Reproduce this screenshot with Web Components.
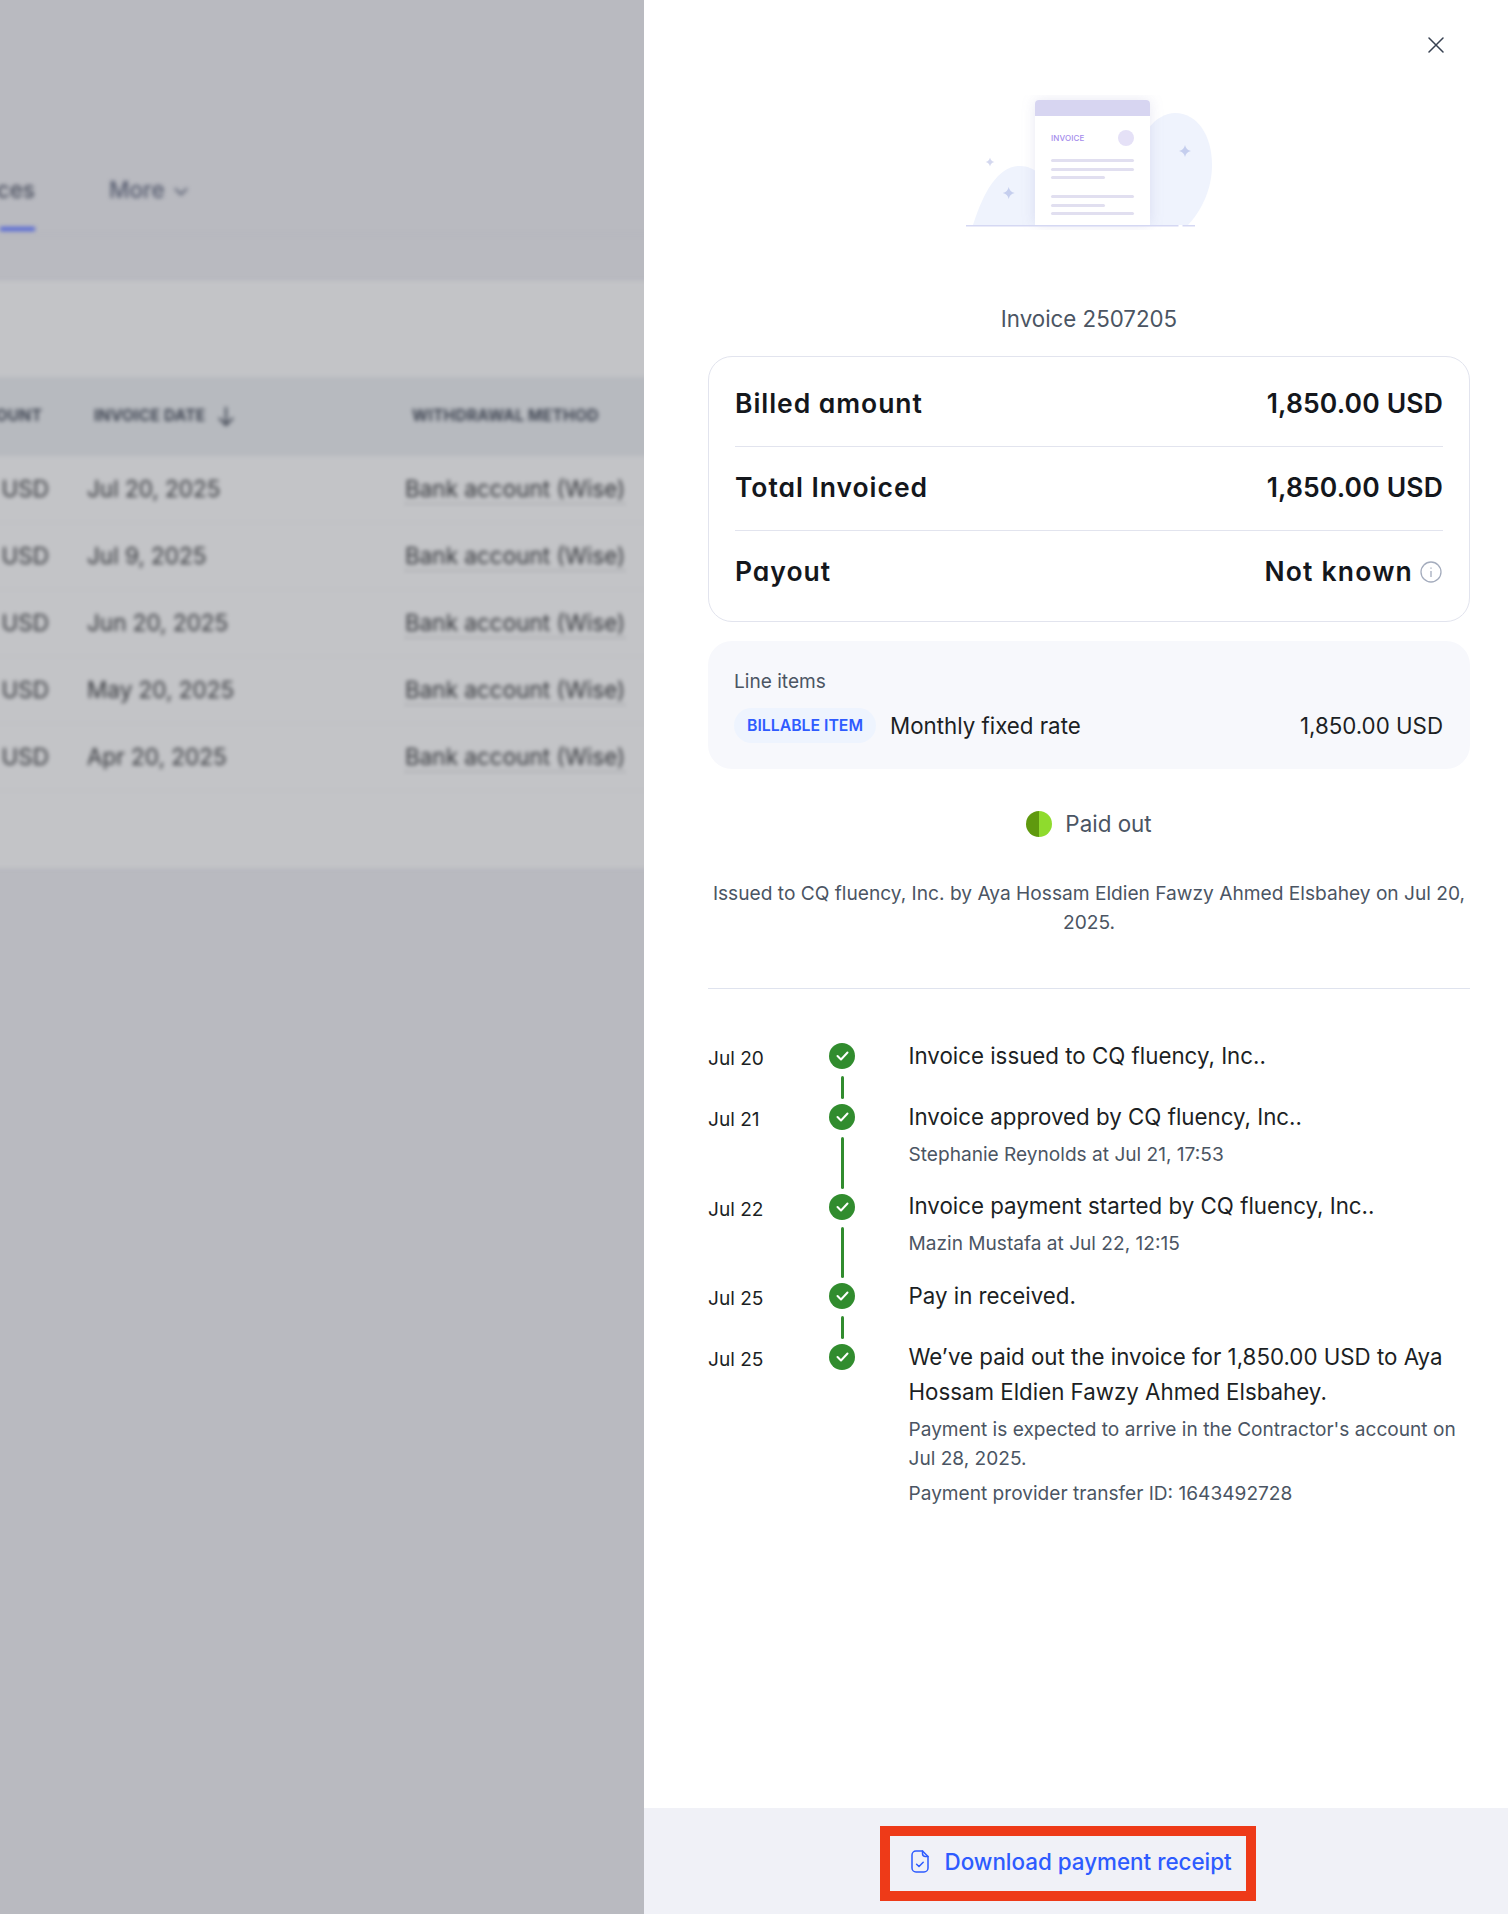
<!DOCTYPE html>
<html lang="en">
<head>
<meta charset="utf-8">
<title>Invoice 2507205</title>
<style>
  html, body { margin: 0; padding: 0; background: #fff; }
  body { font-family: Inter, "Liberation Sans", sans-serif; width: 1508px; height: 1914px; overflow: hidden; }
</style>
</head>
<body>
<app-shell>
  <blurred-page slot="page">
    <tab-bar></tab-bar>
    <invoice-table>
      <table-row amount="1,850.00 USD" date="Jul 20, 2025"></table-row>
      <table-row amount="1,850.00 USD" date="Jul 9, 2025"></table-row>
      <table-row amount="1,850.00 USD" date="Jun 20, 2025"></table-row>
      <table-row amount="1,850.00 USD" date="May 20, 2025"></table-row>
      <table-row amount="1,850.00 USD" date="Apr 20, 2025"></table-row>
    </invoice-table>
  </blurred-page>
  <invoice-panel slot="panel">
    <invoice-art></invoice-art>
    <panel-title>Invoice 2507205</panel-title>
    <summary-card>
      <summary-row pos="first" value="1,850.00 USD">Billed amount</summary-row>
      <summary-row pos="mid" value="1,850.00 USD">Total Invoiced</summary-row>
      <summary-row pos="last" value="Not known" info>Payout</summary-row>
    </summary-card>
    <line-items></line-items>
    <status-pill>Paid out</status-pill>
    <issued-note>Issued to CQ fluency, Inc. by Aya Hossam Eldien Fawzy Ahmed Elsbahey on Jul 20, 2025.</issued-note>
    <time-line>
      <time-item date="Jul 20" connector>Invoice issued to CQ fluency, Inc..</time-item>
      <time-item date="Jul 21" connector>Invoice approved by CQ fluency, Inc..
        <span slot="sub">Stephanie Reynolds at Jul 21, 17:53</span></time-item>
      <time-item date="Jul 22" connector>Invoice payment started by CQ fluency, Inc..
        <span slot="sub">Mazin Mustafa at Jul 22, 12:15</span></time-item>
      <time-item date="Jul 25" connector>Pay in received.</time-item>
      <time-item date="Jul 25">We’ve paid out the invoice for 1,850.00 USD to Aya Hossam Eldien Fawzy Ahmed Elsbahey.
        <span slot="sub">Payment is expected to arrive in the Contractor's account on Jul 28, 2025.</span>
        <span slot="sub">Payment provider transfer ID: 1643492728</span></time-item>
    </time-line>
    <receipt-footer slot="footer"></receipt-footer>
  </invoice-panel>
</app-shell>
<script>
function def(name, css, html, setup) {
  customElements.define(name, class extends HTMLElement {
    connectedCallback() {
      if (this.shadowRoot) return;
      const root = this.attachShadow({ mode: 'open' });
      const h = typeof html === 'function' ? html(this) : html;
      root.innerHTML = '<style>' + css + '</style>' + h;
      if (setup) setup(this, root);
    }
  });
}

def('app-shell', `
  :host { display: grid; grid-template-columns: 644px 864px; width: 1508px; height: 1914px; }
  .l { overflow: hidden; background: #b9bac0; min-width: 0; }
  .r { background: #fff; min-width: 0; }
`, `<div class="l"><slot name="page"></slot></div><div class="r"><slot name="panel"></slot></div>`);

/* The blurred layer runs 20px past the pane on each side so the blur does not fade at the pane's edges. */
def('blurred-page', `
  :host { display: block; height: 100%; margin: 0 -20px; padding: 0 20px; filter: blur(2.1px); color: #3e4148; }
`, `<slot></slot>`);

def('tab-bar', `
  :host { display: flex; align-items: flex-end; height: 234px; margin: 0 -20px; padding-left: 20px; border-bottom: 1px solid #b3b4bb;
    font: 500 22.5px/28px Inter, sans-serif; color: #4a4f5e; gap: 74px; }
  .tab { width: 35px; height: 59px; display: flex; justify-content: flex-end; white-space: nowrap;
    box-sizing: border-box; margin-bottom: 3px; padding-top: 4px; border-bottom: 4px solid #4f62d6; }
  .more { height: 62px; display: flex; gap: 9px; white-space: nowrap; align-items: flex-start; color: #555b6e; padding-top: 4px; box-sizing: border-box; }
  svg { margin-top: 11px; }
`, `<div class="tab">Invoices</div>
    <div class="more">More
      <svg width="14" height="9" viewBox="0 0 14 9" fill="none" stroke="#555b6e" stroke-width="1.8"><path d="M1 1.5l6 6 6-6"/></svg>
    </div>`);

def('invoice-table', `
  :host { display: block; margin: 46px -20px 0; padding: 96px 0 0 20px; background: #c3c4c7; height: 587px; box-sizing: border-box; }
  .head { display: grid; grid-template-columns: 94px 318px 1fr; align-items: center; height: 79px; padding-bottom: 2px; box-sizing: border-box;
    margin-left: -20px; padding-left: 20px; background: #b7babf;
    font: 700 15.6px Inter, sans-serif; letter-spacing: .2px; color: #3f4552; white-space: nowrap; }
  .a { display: flex; justify-content: flex-end; width: 42px; }
  .d { display: flex; align-items: center; gap: 11px; }
  ::slotted(*) { margin-left: -20px; padding-left: 20px; }
`, `<div class="head">
      <div><div class="a">AMOUNT</div></div>
      <div class="d">INVOICE DATE
        <svg width="18" height="22" viewBox="0 0 18 22" fill="none" stroke="#3f4552" stroke-width="2"><path d="M9 2v18M2 13l7 7 7-7"/></svg>
      </div>
      <div>WITHDRAWAL METHOD</div>
    </div><slot></slot>`);

def('table-row', `
  :host { display: grid; grid-template-columns: 87px 318px 1fr; align-items: center; height: 67px; box-sizing: border-box; padding-bottom: 1px;
    border-bottom: 1px solid #bcbdc1; font: 400 22.5px Inter, sans-serif; color: #34363b; white-space: nowrap; }
  .a { display: flex; justify-content: flex-end; width: 49px; }
  .m { display: inline-block; border-bottom: 1px dashed #85878d; line-height: 28px; margin-top: 2px; }
`, el => `<div><div class="a">${el.getAttribute('amount')}</div></div><div>${el.getAttribute('date')}</div><div><span class="m">Bank account (Wise)</span></div>`);

def('invoice-panel', `
  :host { display: flex; flex-direction: column; height: 1914px; }
  .body { flex: 1; min-height: 0; padding: 0 38px 0 64px; position: relative; }
  .close { position: absolute; left: 784px; top: 37px; width: 16px; height: 16px; display: block; }
`, `<div class="body">
      <svg class="close" viewBox="0 0 16 16" fill="none" stroke="#374151" stroke-width="1.5" stroke-linecap="round"><path d="M1 1l14 14M15 1L1 15"/></svg>
      <slot></slot>
    </div><slot name="footer"></slot>`);

def('invoice-art', `
  :host { display: flex; justify-content: center; padding-top: 95px; }
  svg { display: block; }
  .doc { filter: drop-shadow(0 0 7px rgba(90,95,170,.14)); }
  text { font: 500 8px Inter, sans-serif; fill: #a58cec; letter-spacing: .1px; }
`, `<svg width="260" height="135" viewBox="959 95 260 135">
      <path d="M973 225C984 190 999 166 1020 166C1028 166 1033 169 1037 172V225Z" fill="#eff3fd"/>
      <path d="M1148 129C1156 118 1166 113 1175 113C1197 113 1212 135 1212 165C1212 190 1201 211 1188 225H1148Z" fill="#eff3fd"/>
      <g class="doc">
        <path d="M1035 225V104a4 4 0 0 1 4-4h107a4 4 0 0 1 4 4v121Z" fill="#fff"/>
      </g>
      <path d="M1035 116V104a4 4 0 0 1 4-4h107a4 4 0 0 1 4 4v12Z" fill="#d7d5f1"/>
      <text x="1051" y="141">INVOICE</text>
      <circle cx="1126" cy="138" r="8" fill="#e5e1f7"/>
      <g fill="#e1dff0">
        <rect x="1051" y="159" width="83" height="3" rx="1.5"/>
        <rect x="1051" y="168" width="83" height="3" rx="1.5"/>
        <rect x="1051" y="176" width="54" height="3" rx="1.5"/>
        <rect x="1051" y="195" width="83" height="3" rx="1.5"/>
        <rect x="1051" y="204" width="54" height="3" rx="1.5"/>
        <rect x="1051" y="212" width="83" height="3" rx="1.5"/>
      </g>
      <g fill="#c5ceee">
        <path d="M1185 145Q1186 150 1191 151Q1186 152 1185 157Q1184 152 1179 151Q1184 150 1185 145Z"/>
        <path d="M1008.7 187Q1009.7 192 1014.7 193Q1009.7 194 1008.7 199Q1007.7 194 1002.7 193Q1007.7 192 1008.7 187Z"/>
        <path d="M990 157.5Q990.8 161.2 994.5 162Q990.8 162.8 990 166.5Q989.2 162.8 985.5 162Q989.2 161.2 990 157.5Z" fill="#d4d8ef"/>
      </g>
      <path d="M966 225.7H1178.5M1182.5 225.7H1195" stroke="#d5d8f3" stroke-width="1.6"/>
    </svg>`);

def('panel-title', `
  :host { display: block; text-align: center; margin-top: 74px; font: 400 22.3px/30px Inter, sans-serif; color: #4b5563; }
`, `<slot></slot>`);

def('summary-card', `
  :host { display: block; box-sizing: border-box; margin-top: 22px; height: 266px; padding: 0 26px;
    border: 1px solid #e2e4ee; border-radius: 24px; background: #fff; }
`, `<slot></slot>`);

def('summary-row', `
  :host { display: flex; justify-content: space-between; align-items: center; box-sizing: border-box;
    font: 600 26.5px/32px Inter, sans-serif; font-feature-settings: "cv11" 1; color: #14171c; white-space: nowrap; }
  :host([pos=first]) { height: 90px; padding-top: 3px; border-bottom: 1px solid #e2e4ee; }
  :host([pos=mid]) { height: 84px; padding-bottom: 3px; border-bottom: 1px solid #e2e4ee; }
  :host([pos=last]) { height: 90px; padding-bottom: 11px; }
  .k { letter-spacing: .95px; }
  .v { display: flex; align-items: center; gap: 7px; letter-spacing: .15px; }
  .known { letter-spacing: 1.2px; }
  svg { display: block; margin: 2px 1px 0 0; }
`, el => `<div class="k"><slot></slot></div><div class="v"><span class="${el.hasAttribute('info') ? 'known' : ''}">${el.getAttribute('value')}</span>${el.hasAttribute('info') ? `<svg width="22" height="22" viewBox="0 0 22 22" fill="none" stroke="#a4acbd" stroke-width="1.3"><circle cx="11" cy="11" r="10"/><path d="M11 10v6M11 6.4v1.4"/></svg>` : ''}</div>`);

def('line-items', `
  :host { display: block; box-sizing: border-box; margin-top: 19px; height: 128px; padding: 27px 27px 0 26px;
    background: #f7f8fc; border-radius: 24px; }
  .h { font: 400 19.1px/26px Inter, sans-serif; color: #4b5563; }
  .r { display: flex; align-items: center; margin-top: 14px; font: 400 22.3px/35px Inter, sans-serif; color: #1c1f24; }
  .b { height: 35px; width: 142px; box-sizing: border-box; display: flex; align-items: center; justify-content: center;
    border-radius: 18px; background: #eef4fe; color: #2f5bff; font: 600 15.8px Inter, sans-serif; margin-right: 14px; }
  .t { flex: 1; }
`, `<div class="h">Line items</div><div class="r"><div class="b">BILLABLE ITEM</div><div class="t">Monthly fixed rate</div><div>1,850.00 USD</div></div>`);

def('status-pill', `
  :host { display: flex; justify-content: center; align-items: center; gap: 13px; margin-top: 42px; height: 26px;
    font: 400 22.4px/26px Inter, sans-serif; color: #4b5563; }
  i { display: block; width: 26px; height: 26px; border-radius: 50%; background: linear-gradient(90deg, #5f990e 50%, #8fdb2d 50%); }
`, `<i></i><slot></slot>`);

def('issued-note', `
  :host { display: block; margin-top: 41.5px; padding-bottom: 50.5px; border-bottom: 1px solid #dfe3ee; text-align: center;
    font: 400 19.15px/29.5px Inter, sans-serif; color: #4b5563; }
`, `<slot></slot>`);

def('time-line', `:host { display: block; margin-top: 54px; }`, `<slot></slot>`);

def('time-item', `
  :host { display: grid; grid-template-columns: 121px 26px 1fr; column-gap: 0; min-height: 61px; }
  .d { font: 400 19.1px/24px Inter, sans-serif; color: #1c1f24; margin-top: 3px; }
  .c { display: flex; flex-direction: column; align-items: center; }
  .dot { width: 26px; height: 26px; flex: none; border-radius: 50%; background: #318c2e; display: flex; align-items: center; justify-content: center; }
  .line { width: 3px; flex: 1; margin: 7px 0 5px; border-radius: 2px; background: #318c2e; }
  .b { padding: 0 0 25px 53.5px; margin-top: -5.5px; font: 400 22.3px/35px Inter, sans-serif; color: #1c1f24; }
  ::slotted([slot=sub]) { display: block; margin-top: 6px; font: 400 19.1px/29px Inter, sans-serif; color: #4b5563; }
`, el => `<div class="d">${el.getAttribute('date')}</div>
    <div class="c"><div class="dot"><svg width="13" height="10" viewBox="0 0 13 10" fill="none" stroke="#fff" stroke-width="2" stroke-linecap="round" stroke-linejoin="round"><path d="M1.5 5l3.5 3.5 6.5-7"/></svg></div>${el.hasAttribute('connector') ? '<div class="line"></div>' : ''}</div>
    <div class="b"><slot></slot><slot name="sub"></slot></div>`);

def('receipt-footer', `
  :host { display: block; height: 106px; box-sizing: border-box; background: #f0f1f7; padding: 18px 0 0 236px; }
  .btn { display: flex; align-items: center; gap: 15.5px; box-sizing: border-box; width: 376px; height: 75px; padding: 0 0 5px 21px;
    border: 10px solid #ee3a18; font: 500 22.4px Inter, sans-serif; color: #2d5bff; white-space: nowrap; }
  svg { display: block; flex: none; }
`, `<div class="btn"><svg width="18" height="23" viewBox="0 0 18 23" fill="none" stroke="#2d5bff" stroke-width="1.5" stroke-linecap="round" stroke-linejoin="round"><path d="M5 1h6.5L17 6.5V18a4 4 0 0 1-4 4H5a4 4 0 0 1-4-4V5a4 4 0 0 1 4-4Z"/><path d="M11.5 1v2.5a3 3 0 0 0 3 3H17"/><path d="M5.6 14.2l2.4 2.3 4.2-4.2"/></svg>Download payment receipt</div>`);
</script>
</body>
</html>
